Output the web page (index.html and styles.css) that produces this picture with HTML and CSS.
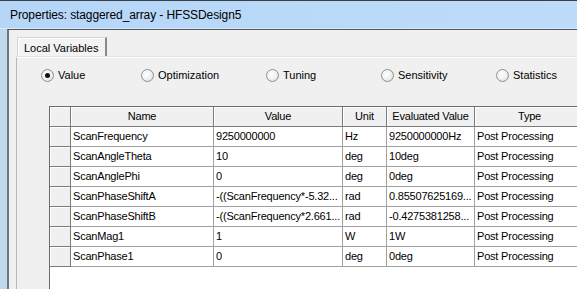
FILE: index.html
```html
<!DOCTYPE html>
<html lang="en">
<head>
    <meta charset="UTF-8">
    <title>Properties: staggered_array - HFSSDesign5</title>
    <link rel="stylesheet" href="styles.css">
</head>
<body>
    <div class="window">
        <div class="titlebar">Properties: staggered_array - HFSSDesign5</div>
        <div class="frame">
            <div class="frame-edge"></div>
            <div class="client">
                <div class="tabs">
                    <div class="tab active">Local Variables</div>
                </div>
                <div class="tab-panel">
                    <div class="radios">
                        <label class="radio-item"><span class="radio checked"></span>Value</label>
                        <label class="radio-item"><span class="radio"></span>Optimization</label>
                        <label class="radio-item"><span class="radio"></span>Tuning</label>
                        <label class="radio-item"><span class="radio"></span>Sensitivity</label>
                        <label class="radio-item"><span class="radio"></span>Statistics</label>
                    </div>

                    <div class="grid-wrap">
                        <div class="grid">
                            <div class="head corner"></div>
                            <div class="head">Name</div>
                            <div class="head">Value</div>
                            <div class="head">Unit</div>
                            <div class="head">Evaluated Value</div>
                            <div class="head">Type</div>

                            <div class="rowhead"></div>
                            <div class="cell">ScanFrequency</div>
                            <div class="cell">9250000000</div>
                            <div class="cell">Hz</div>
                            <div class="cell">9250000000Hz</div>
                            <div class="cell">Post Processing</div>

                            <div class="rowhead"></div>
                            <div class="cell">ScanAngleTheta</div>
                            <div class="cell">10</div>
                            <div class="cell">deg</div>
                            <div class="cell">10deg</div>
                            <div class="cell">Post Processing</div>

                            <div class="rowhead"></div>
                            <div class="cell">ScanAnglePhi</div>
                            <div class="cell">0</div>
                            <div class="cell">deg</div>
                            <div class="cell">0deg</div>
                            <div class="cell">Post Processing</div>

                            <div class="rowhead"></div>
                            <div class="cell">ScanPhaseShiftA</div>
                            <div class="cell">-((ScanFrequency*-5.32...</div>
                            <div class="cell">rad</div>
                            <div class="cell">0.85507625169...</div>
                            <div class="cell">Post Processing</div>

                            <div class="rowhead"></div>
                            <div class="cell">ScanPhaseShiftB</div>
                            <div class="cell">-((ScanFrequency*2.661...</div>
                            <div class="cell">rad</div>
                            <div class="cell">-0.4275381258...</div>
                            <div class="cell">Post Processing</div>

                            <div class="rowhead"></div>
                            <div class="cell">ScanMag1</div>
                            <div class="cell">1</div>
                            <div class="cell">W</div>
                            <div class="cell">1W</div>
                            <div class="cell">Post Processing</div>

                            <div class="rowhead"></div>
                            <div class="cell">ScanPhase1</div>
                            <div class="cell">0</div>
                            <div class="cell">deg</div>
                            <div class="cell">0deg</div>
                            <div class="cell">Post Processing</div>
                        </div>
                    </div>
                </div>
            </div>
        </div>
    </div>
</body>
</html>
```

FILE: styles.css
```css
body {
    margin: 0;
    padding: 0;
    font-family: 'Liberation Sans', Arial, sans-serif;
    font-size: 11px;
    color: #000;
}

.window {
    width: 577px;
    height: 289px;
    overflow: hidden;
    display: flex;
    flex-direction: column;
    background: #f0f0f0;
}

.titlebar {
    height: 27px;
    line-height: 28px;
    padding-left: 10px;
    font-size: 12px;
    letter-spacing: -0.1px;
    background: linear-gradient(to right, #b6d6f8, #bddcfa);
    border-top: 1px solid #3a3f46;
    border-bottom: 1px solid #dbe9f7;
    white-space: nowrap;
}

.frame {
    flex: 1;
    display: flex;
    min-height: 0;
}

.frame-edge {
    width: 7px;
    background: #c2d8ee;
}

.client {
    flex: 1;
    min-width: 0;
    display: flex;
    flex-direction: column;
    padding: 7px 0 0 7px;
    border-top: 1px solid #4f5863;
    border-left: 2px solid #6d7580;
    background: #f0f0f0;
}

.tabs {
    display: flex;
    padding-left: 1px;
}

.tab {
    height: 20px;
    line-height: 20px;
    padding: 0 7px 0 6px;
    background: #f3f3f3;
    border: 1px solid #d6d6d6;
    border-bottom: none;
    border-right: 2px solid #8a8a8a;
    box-sizing: border-box;
    box-shadow: inset 1px 1px 0 #fff;
}

.tab-panel {
    flex: 1;
    display: flex;
    flex-direction: column;
    min-width: 0;
    border-top: 1px solid #fff;
    border-left: 1px solid #b8b8b8;
    box-shadow: 0 -1px 0 #e2e2e2;
    padding: 11px 0 0 24px;
}

.radios {
    display: grid;
    grid-template-columns: 100px 125px 115px 115px auto;
    height: 13px;
}

.radio-item {
    display: flex;
    align-items: center;
    gap: 4px;
    line-height: 13px;
    white-space: nowrap;
}

.radio {
    width: 13px;
    height: 13px;
    box-sizing: border-box;
    border-radius: 50%;
    border: 1px solid #8f9090;
    background: radial-gradient(circle at 40% 40%, #fff 0%, #f1f1f1 50%, #d4d4d4 100%);
    position: relative;
}

.radio.checked::after {
    content: "";
    position: absolute;
    left: 3px;
    top: 3px;
    width: 5px;
    height: 5px;
    border-radius: 50%;
    background: #111;
}

.grid-wrap {
    flex: 1;
    margin: 24px 0 0 8px;
    background: #fff;
    border-left: 1px solid #6a6a6a;
    border-top: 1px solid #6a6a6a;
    overflow: hidden;
}

.grid {
    display: grid;
    grid-template-columns: 21px 143px 129px 44px 88px 110px;
    grid-auto-rows: 20px;
    letter-spacing: -0.2px;
}

.grid > div {
    box-sizing: border-box;
    white-space: nowrap;
    overflow: hidden;
    line-height: 19px;
}

.head {
    background: #f0f0f0;
    text-align: center;
    border-right: 1px solid #7c7c7c;
    border-bottom: 1px solid #7c7c7c;
    box-shadow: inset 1px 1px 0 #fff;
}

.rowhead {
    background: #f0f0f0;
    border-right: 1px solid #7c7c7c;
    border-bottom: 1px solid #7c7c7c;
    box-shadow: inset 1px 1px 0 #fff;
}

.cell {
    padding-left: 2px;
    border-right: 1px solid #a0a0a0;
    border-bottom: 1px solid #a0a0a0;
}
```
